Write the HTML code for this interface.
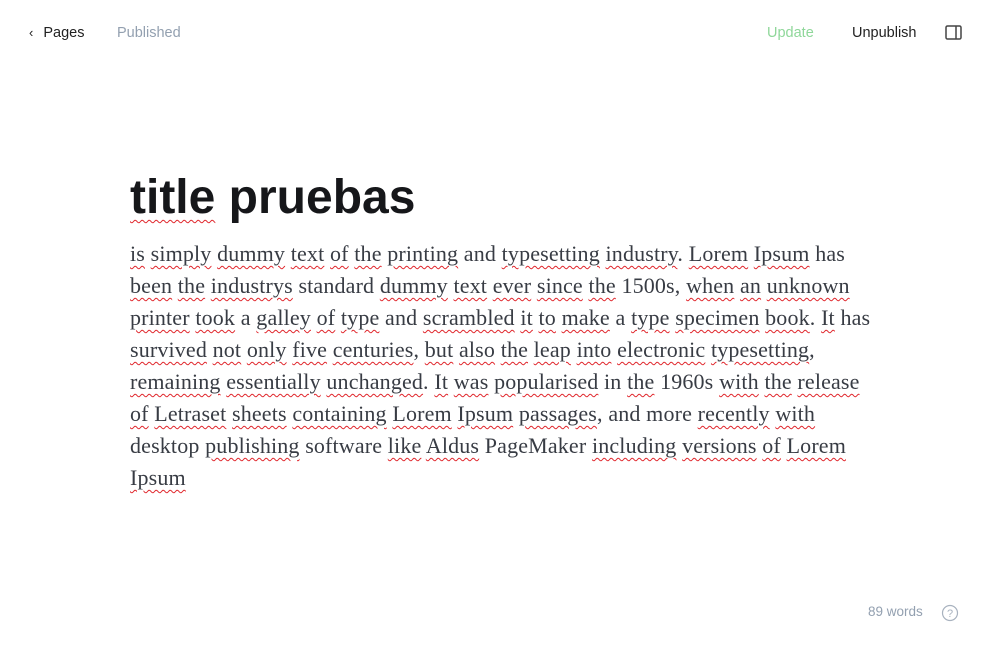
<!DOCTYPE html>
<html><head><meta charset="utf-8"><style>
body{margin:0;width:1000px;height:660px;background:#fff;position:relative;font-family:"Liberation Sans",sans-serif;overflow:hidden}
.nav{position:absolute;top:24px;font-size:14.5px;line-height:18px}
h1{position:absolute;left:130px;top:170px;margin:0;font-size:48px;font-weight:bold;color:#16171a;letter-spacing:0;line-height:56px}
.body{position:absolute;left:130px;top:238px;font-family:"Liberation Serif",serif;font-size:22px;letter-spacing:0.15px;line-height:32px;color:#383c44;white-space:nowrap}
.u{text-decoration:underline wavy #e0252b;text-decoration-thickness:1px;text-underline-offset:4px}
</style></head><body>
<div class="nav" style="left:29px;color:#222"><span style="font-size:13px;margin-right:10px">&#8249;</span>Pages</div>
<div class="nav" style="left:117px;color:#93a0b0">Published</div>
<div class="nav" style="left:767px;color:#8fd79a">Update</div>
<div class="nav" style="left:852px;color:#222">Unpublish</div>
<svg style="position:absolute;left:945px;top:25px" width="18" height="16" viewBox="0 0 18 16"><rect x="1" y="1" width="15" height="13" rx="1.5" fill="none" stroke="#444" stroke-width="1.5"/><line x1="11" y1="1" x2="11" y2="14" stroke="#444" stroke-width="1.5"/></svg>
<h1><span class="u" style="text-underline-offset:6px">title</span> pruebas</h1>
<div class="body">
<span class="u">is</span> <span class="u">simply</span> <span class="u">dummy</span> <span class="u">text</span> <span class="u">of</span> <span class="u">the</span> <span class="u">printing</span> and <span class="u">typesetting</span> <span class="u">industry</span>. <span class="u">Lorem</span> <span class="u">Ipsum</span> has<br>
<span class="u">been</span> <span class="u">the</span> <span class="u">industrys</span> standard <span class="u">dummy</span> <span class="u">text</span> <span class="u">ever</span> <span class="u">since</span> <span class="u">the</span> 1500s, <span class="u">when</span> <span class="u">an</span> <span class="u">unknown</span><br>
<span class="u">printer</span> <span class="u">took</span> a <span class="u">galley</span> <span class="u">of</span> <span class="u">type</span> and <span class="u">scrambled</span> <span class="u">it</span> <span class="u">to</span> <span class="u">make</span> a <span class="u">type</span> <span class="u">specimen</span> <span class="u">book</span>. <span class="u">It</span> has<br>
<span class="u">survived</span> <span class="u">not</span> <span class="u">only</span> <span class="u">five</span> <span class="u">centuries</span>, <span class="u">but</span> <span class="u">also</span> <span class="u">the</span> <span class="u">leap</span> <span class="u">into</span> <span class="u">electronic</span> <span class="u">typesetting</span>,<br>
<span class="u">remaining</span> <span class="u">essentially</span> <span class="u">unchanged</span>. <span class="u">It</span> <span class="u">was</span> <span class="u">popularised</span> in <span class="u">the</span> 1960s <span class="u">with</span> <span class="u">the</span> <span class="u">release</span><br>
<span class="u">of</span> <span class="u">Letraset</span> <span class="u">sheets</span> <span class="u">containing</span> <span class="u">Lorem</span> <span class="u">Ipsum</span> <span class="u">passages</span>, and more <span class="u">recently</span> <span class="u">with</span><br>
desktop <span class="u">publishing</span> software <span class="u">like</span> <span class="u">Aldus</span> PageMaker <span class="u">including</span> <span class="u">versions</span> <span class="u">of</span> <span class="u">Lorem</span><br>
<span class="u">Ipsum</span>
</div>
<div style="position:absolute;left:868px;top:604px;font-size:13.5px;color:#93a0b0">89 words</div>
<svg style="position:absolute;left:941px;top:604px" width="18" height="18" viewBox="0 0 18 18"><circle cx="9" cy="9" r="7.5" fill="none" stroke="#a8b2bf" stroke-width="1.2"/><text x="9" y="13" font-size="11" text-anchor="middle" fill="#a8b2bf" font-family="Liberation Sans">?</text></svg>
</body></html>
